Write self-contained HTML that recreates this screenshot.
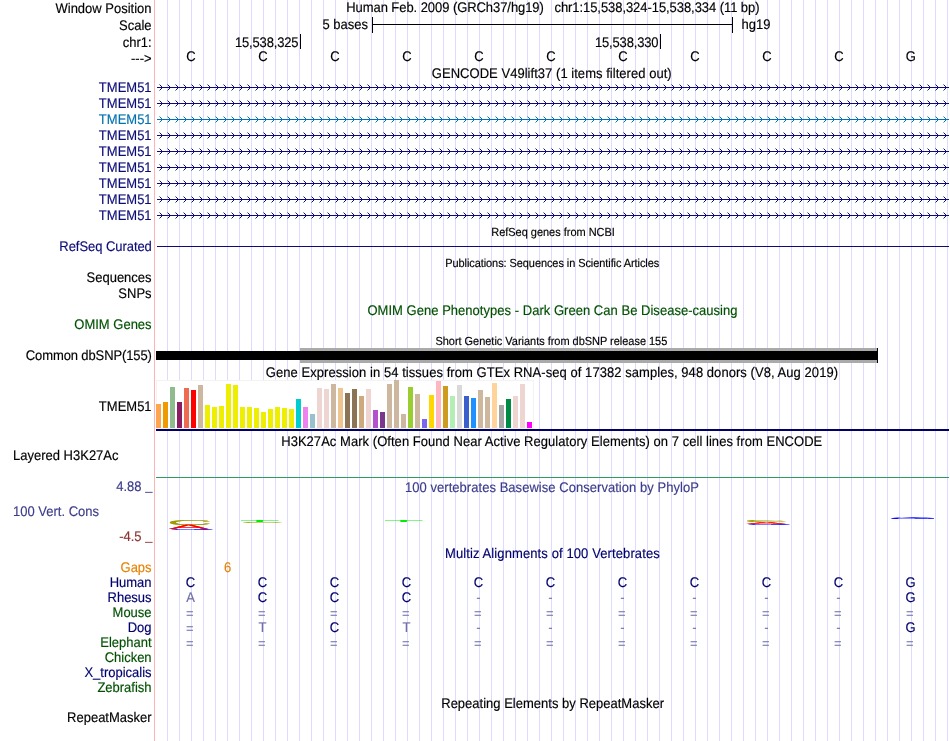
<!DOCTYPE html>
<html lang="en"><head><meta charset="utf-8"><title>UCSC Genome Browser chr1:15,538,324-15,538,334</title>
<style>html,body{margin:0;padding:0;background:#fff}body{width:950px;height:741px;overflow:hidden}svg{display:block;will-change:transform}text{stroke-width:0.15px;text-rendering:geometricPrecision;font-family:"Liberation Sans",sans-serif;font-size:13px}.s{font-size:11px}.r{text-anchor:end}.c{text-anchor:middle}</style>
</head><body>
<svg width="950" height="741" viewBox="0 0 950 741">
<rect width="950" height="741" fill="#fff"/>
<g fill="#dcdcff" shape-rendering="crispEdges">
<rect x="167" y="0" width="1" height="741"/>
<rect x="179" y="0" width="1" height="741"/>
<rect x="191" y="0" width="1" height="741"/>
<rect x="203" y="0" width="1" height="741"/>
<rect x="215" y="0" width="1" height="741"/>
<rect x="227" y="0" width="1" height="741"/>
<rect x="239" y="0" width="1" height="741"/>
<rect x="251" y="0" width="1" height="741"/>
<rect x="263" y="0" width="1" height="741"/>
<rect x="275" y="0" width="1" height="741"/>
<rect x="287" y="0" width="1" height="741"/>
<rect x="299" y="0" width="1" height="741"/>
<rect x="311" y="0" width="1" height="741"/>
<rect x="323" y="0" width="1" height="741"/>
<rect x="335" y="0" width="1" height="741"/>
<rect x="347" y="0" width="1" height="741"/>
<rect x="359" y="0" width="1" height="741"/>
<rect x="371" y="0" width="1" height="741"/>
<rect x="383" y="0" width="1" height="741"/>
<rect x="395" y="0" width="1" height="741"/>
<rect x="407" y="0" width="1" height="741"/>
<rect x="419" y="0" width="1" height="741"/>
<rect x="431" y="0" width="1" height="741"/>
<rect x="443" y="0" width="1" height="741"/>
<rect x="455" y="0" width="1" height="741"/>
<rect x="467" y="0" width="1" height="741"/>
<rect x="479" y="0" width="1" height="741"/>
<rect x="491" y="0" width="1" height="741"/>
<rect x="503" y="0" width="1" height="741"/>
<rect x="515" y="0" width="1" height="741"/>
<rect x="527" y="0" width="1" height="741"/>
<rect x="539" y="0" width="1" height="741"/>
<rect x="551" y="0" width="1" height="741"/>
<rect x="563" y="0" width="1" height="741"/>
<rect x="575" y="0" width="1" height="741"/>
<rect x="587" y="0" width="1" height="741"/>
<rect x="599" y="0" width="1" height="741"/>
<rect x="611" y="0" width="1" height="741"/>
<rect x="623" y="0" width="1" height="741"/>
<rect x="635" y="0" width="1" height="741"/>
<rect x="647" y="0" width="1" height="741"/>
<rect x="659" y="0" width="1" height="741"/>
<rect x="671" y="0" width="1" height="741"/>
<rect x="683" y="0" width="1" height="741"/>
<rect x="695" y="0" width="1" height="741"/>
<rect x="707" y="0" width="1" height="741"/>
<rect x="719" y="0" width="1" height="741"/>
<rect x="731" y="0" width="1" height="741"/>
<rect x="743" y="0" width="1" height="741"/>
<rect x="755" y="0" width="1" height="741"/>
<rect x="767" y="0" width="1" height="741"/>
<rect x="779" y="0" width="1" height="741"/>
<rect x="791" y="0" width="1" height="741"/>
<rect x="803" y="0" width="1" height="741"/>
<rect x="815" y="0" width="1" height="741"/>
<rect x="827" y="0" width="1" height="741"/>
<rect x="839" y="0" width="1" height="741"/>
<rect x="851" y="0" width="1" height="741"/>
<rect x="863" y="0" width="1" height="741"/>
<rect x="875" y="0" width="1" height="741"/>
<rect x="887" y="0" width="1" height="741"/>
<rect x="899" y="0" width="1" height="741"/>
<rect x="911" y="0" width="1" height="741"/>
<rect x="923" y="0" width="1" height="741"/>
<rect x="935" y="0" width="1" height="741"/>
<rect x="947" y="0" width="1" height="741"/>
</g>
<rect x="154" y="0" width="1" height="741" fill="#ffb4b4" shape-rendering="crispEdges"/>
<g fill="#000" shape-rendering="crispEdges">
<rect x="372" y="24" width="361" height="1"/>
<rect x="372" y="17" width="1" height="16"/>
<rect x="732" y="17" width="1" height="16"/>
<rect x="300" y="34" width="1" height="15"/>
<rect x="660" y="34" width="1" height="15"/>
</g>
<g fill="#000" stroke="#000">
<text class="r" x="151.6" y="12.178" transform="scale(1 1.07)">Window Position</text>
<text class="r" x="151.6" y="28.065" transform="scale(1 1.07)">Scale</text>
<text class="r" x="151.6" y="43.953" transform="scale(1 1.07)">chr1:</text>
<text class="r" x="151.6" y="58.907" transform="scale(1 1.07)">---&gt;</text>
<text x="346.24" y="11.243" transform="scale(1 1.07)" fill="#000" stroke="#000" textLength="413.28" lengthAdjust="spacing" xml:space="preserve">Human Feb. 2009 (GRCh37/hg19)   chr1:15,538,324-15,538,334 (11 bp)</text>
<text class="r" x="368" y="27.131" transform="scale(1 1.07)">5 bases</text>
<text x="741.5" y="27.131" transform="scale(1 1.07)">hg19</text>
<text class="r" x="298.6" y="43.953" transform="scale(1 1.07)" textLength="63.7" lengthAdjust="spacing">15,538,325</text>
<text class="r" x="658.6" y="43.953" transform="scale(1 1.07)" textLength="63.7" lengthAdjust="spacing">15,538,330</text>
<text class="c" x="190.9" y="57.037" transform="scale(1 1.07)">C</text>
<text class="c" x="262.9" y="57.037" transform="scale(1 1.07)">C</text>
<text class="c" x="334.9" y="57.037" transform="scale(1 1.07)">C</text>
<text class="c" x="406.9" y="57.037" transform="scale(1 1.07)">C</text>
<text class="c" x="478.9" y="57.037" transform="scale(1 1.07)">C</text>
<text class="c" x="550.9" y="57.037" transform="scale(1 1.07)">C</text>
<text class="c" x="622.9" y="57.037" transform="scale(1 1.07)">C</text>
<text class="c" x="694.9" y="57.037" transform="scale(1 1.07)">C</text>
<text class="c" x="766.9" y="57.037" transform="scale(1 1.07)">C</text>
<text class="c" x="838.9" y="57.037" transform="scale(1 1.07)">C</text>
<text class="c" x="910.9" y="57.037" transform="scale(1 1.07)">G</text>
<text x="431.80" y="72.925" transform="scale(1 1.07)" fill="#000" stroke="#000" textLength="239.90" lengthAdjust="spacing" xml:space="preserve">GENCODE V49lift37 (1 items filtered out)</text>
</g>
<defs><pattern id="cv" x="155" y="84" width="8" height="16" patternUnits="userSpaceOnUse"><g fill="#0c0c78" shape-rendering="crispEdges"><rect x="6" y="2" width="1" height="1"/><rect x="6" y="3" width="1" height="1"/><rect x="6" y="4" width="1" height="1"/><rect x="5" y="1" width="1" height="1"/><rect x="5" y="5" width="1" height="1"/><rect x="4" y="0" width="1" height="1" opacity="0.45"/><rect x="4" y="6" width="1" height="1" opacity="0.45"/></g></pattern><pattern id="cw" x="155" y="84" width="8" height="16" patternUnits="userSpaceOnUse"><g fill="#0171af" shape-rendering="crispEdges"><rect x="6" y="2" width="1" height="1"/><rect x="6" y="3" width="1" height="1"/><rect x="6" y="4" width="1" height="1"/><rect x="5" y="1" width="1" height="1"/><rect x="5" y="5" width="1" height="1"/><rect x="4" y="0" width="1" height="1" opacity="0.45"/><rect x="4" y="6" width="1" height="1" opacity="0.45"/></g></pattern></defs>
<g shape-rendering="crispEdges">
<rect x="155" y="84" width="792" height="32" fill="url(#cv)"/>
<rect x="155" y="116" width="792" height="16" fill="url(#cw)"/>
<rect x="155" y="132" width="792" height="96" fill="url(#cv)"/>
<rect x="157" y="87" width="792" height="1" fill="#0c0c78"/>
<rect x="157" y="103" width="792" height="1" fill="#0c0c78"/>
<rect x="157" y="119" width="792" height="1" fill="#0171af"/>
<rect x="157" y="135" width="792" height="1" fill="#0c0c78"/>
<rect x="157" y="151" width="792" height="1" fill="#0c0c78"/>
<rect x="157" y="167" width="792" height="1" fill="#0c0c78"/>
<rect x="157" y="183" width="792" height="1" fill="#0c0c78"/>
<rect x="157" y="199" width="792" height="1" fill="#0c0c78"/>
<rect x="157" y="215" width="792" height="1" fill="#0c0c78"/>
</g>
<text class="r" x="151.6" y="86.009" transform="scale(1 1.07)" fill="#0c0c78" stroke="#0c0c78">TMEM51</text>
<text class="r" x="151.6" y="100.963" transform="scale(1 1.07)" fill="#0c0c78" stroke="#0c0c78">TMEM51</text>
<text class="r" x="151.6" y="115.916" transform="scale(1 1.07)" fill="#0171af" stroke="#0171af">TMEM51</text>
<text class="r" x="151.6" y="130.869" transform="scale(1 1.07)" fill="#0c0c78" stroke="#0c0c78">TMEM51</text>
<text class="r" x="151.6" y="145.822" transform="scale(1 1.07)" fill="#0c0c78" stroke="#0c0c78">TMEM51</text>
<text class="r" x="151.6" y="160.776" transform="scale(1 1.07)" fill="#0c0c78" stroke="#0c0c78">TMEM51</text>
<text class="r" x="151.6" y="175.729" transform="scale(1 1.07)" fill="#0c0c78" stroke="#0c0c78">TMEM51</text>
<text class="r" x="151.6" y="190.682" transform="scale(1 1.07)" fill="#0c0c78" stroke="#0c0c78">TMEM51</text>
<text class="r" x="151.6" y="205.636" transform="scale(1 1.07)" fill="#0c0c78" stroke="#0c0c78">TMEM51</text>
<text class="s" x="491.20" y="220.589" transform="scale(1 1.07)" fill="#000" stroke="#000" textLength="123.69" lengthAdjust="spacing" xml:space="preserve">RefSeq genes from NCBI</text>
<text x="59.32" y="234.607" transform="scale(1 1.07)" fill="#0c0c78" stroke="#0c0c78" textLength="92.53" lengthAdjust="spacing" xml:space="preserve">RefSeq Curated</text>
<rect x="157" y="246" width="792" height="1" fill="#0c0c78" shape-rendering="crispEdges"/>
<text class="s" x="445.20" y="249.561" transform="scale(1 1.07)" fill="#000" stroke="#000" textLength="214.07" lengthAdjust="spacing" xml:space="preserve">Publications: Sequences in Scientific Articles</text>
<text class="r" x="151.6" y="263.579" transform="scale(1 1.07)" fill="#000" stroke="#000">Sequences</text>
<text class="r" x="151.6" y="278.533" transform="scale(1 1.07)" fill="#000" stroke="#000">SNPs</text>
<text x="367.40" y="294.421" transform="scale(1 1.07)" fill="#005000" stroke="#005000" textLength="370.12" lengthAdjust="spacing" xml:space="preserve">OMIM Gene Phenotypes - Dark Green Can Be Disease-causing</text>
<text class="r" x="151.6" y="307.505" transform="scale(1 1.07)" fill="#005000" stroke="#005000">OMIM Genes</text>
<text class="s" x="435.40" y="322.458" transform="scale(1 1.07)" fill="#000" stroke="#000" textLength="231.91" lengthAdjust="spacing" xml:space="preserve">Short Genetic Variants from dbSNP release 155</text>
<text x="25.80" y="336.477" transform="scale(1 1.07)" fill="#000" stroke="#000" textLength="126.07" lengthAdjust="spacing" xml:space="preserve">Common dbSNP(155)</text>
<g shape-rendering="crispEdges">
<rect x="300" y="348" width="577" height="15" fill="#aaaaaa"/>
<rect x="156" y="351" width="722" height="9" fill="#000"/>
<rect x="877" y="348" width="1" height="15" fill="#000"/>
</g>
<text x="265.80" y="352.364" transform="scale(1 1.07)" fill="#000" stroke="#000" textLength="572.25" lengthAdjust="spacing" xml:space="preserve">Gene Expression in 54 tissues from GTEx RNA-seq of 17382 samples, 948 donors (V8, Aug 2019)</text>
<text class="r" x="151.6" y="384.140" transform="scale(1 1.07)" fill="#000" stroke="#000">TMEM51</text>
<g shape-rendering="crispEdges">
<rect x="156" y="380" width="378" height="49" fill="#f3f3f3"/>
<rect x="157" y="381" width="376" height="47" fill="#fff"/>
<rect x="156" y="404" width="5" height="24" fill="#FFA54F"/>
<rect x="163" y="402" width="5" height="26" fill="#EE9A00"/>
<rect x="170" y="387" width="5" height="41" fill="#8FBC8F"/>
<rect x="177" y="402" width="5" height="26" fill="#8B1C62"/>
<rect x="184" y="388" width="5" height="40" fill="#EE6A50"/>
<rect x="191" y="390" width="5" height="38" fill="#FF0000"/>
<rect x="198" y="385" width="5" height="43" fill="#CDB79E"/>
<rect x="205" y="405" width="5" height="23" fill="#EEEE00"/>
<rect x="212" y="407" width="5" height="21" fill="#EEEE00"/>
<rect x="219" y="406" width="5" height="22" fill="#EEEE00"/>
<rect x="226" y="384" width="5" height="44" fill="#EEEE00"/>
<rect x="233" y="385" width="5" height="43" fill="#EEEE00"/>
<rect x="240" y="407" width="5" height="21" fill="#EEEE00"/>
<rect x="247" y="407" width="5" height="21" fill="#EEEE00"/>
<rect x="254" y="408" width="5" height="20" fill="#EEEE00"/>
<rect x="261" y="412" width="5" height="16" fill="#EEEE00"/>
<rect x="268" y="409" width="5" height="19" fill="#EEEE00"/>
<rect x="275" y="407" width="5" height="21" fill="#EEEE00"/>
<rect x="282" y="408" width="5" height="20" fill="#EEEE00"/>
<rect x="289" y="409" width="5" height="19" fill="#EEEE00"/>
<rect x="296" y="399" width="5" height="29" fill="#00CDCD"/>
<rect x="303" y="407" width="5" height="21" fill="#EE82EE"/>
<rect x="310" y="414" width="5" height="14" fill="#9AC0CD"/>
<rect x="317" y="388" width="5" height="40" fill="#EED5D2"/>
<rect x="324" y="389" width="5" height="39" fill="#EED5D2"/>
<rect x="331" y="384" width="5" height="44" fill="#CDB79E"/>
<rect x="338" y="388" width="5" height="40" fill="#EEC591"/>
<rect x="345" y="393" width="5" height="35" fill="#8B7355"/>
<rect x="352" y="389" width="5" height="39" fill="#8B7355"/>
<rect x="359" y="396" width="5" height="32" fill="#CDAA7D"/>
<rect x="366" y="389" width="5" height="39" fill="#EED5D2"/>
<rect x="373" y="410" width="5" height="18" fill="#B452CD"/>
<rect x="380" y="412" width="5" height="16" fill="#7A378B"/>
<rect x="387" y="384" width="5" height="44" fill="#CDB79E"/>
<rect x="394" y="380" width="5" height="48" fill="#CDB79E"/>
<rect x="401" y="414" width="5" height="14" fill="#CDB79E"/>
<rect x="408" y="387" width="5" height="41" fill="#9ACD32"/>
<rect x="415" y="394" width="5" height="34" fill="#CDB79E"/>
<rect x="422" y="419" width="5" height="9" fill="#7A67EE"/>
<rect x="429" y="395" width="5" height="33" fill="#FFD700"/>
<rect x="436" y="381" width="5" height="47" fill="#FFB6C1"/>
<rect x="443" y="386" width="5" height="42" fill="#CD9B1D"/>
<rect x="450" y="396" width="5" height="32" fill="#B4EEB4"/>
<rect x="457" y="385" width="5" height="43" fill="#D9D9D9"/>
<rect x="464" y="396" width="5" height="32" fill="#3A5FCD"/>
<rect x="471" y="398" width="5" height="30" fill="#1E90FF"/>
<rect x="478" y="390" width="5" height="38" fill="#CDB79E"/>
<rect x="485" y="397" width="5" height="31" fill="#CDB79E"/>
<rect x="492" y="383" width="5" height="45" fill="#FFD39B"/>
<rect x="499" y="405" width="5" height="23" fill="#A6A6A6"/>
<rect x="506" y="399" width="5" height="29" fill="#008B45"/>
<rect x="513" y="396" width="5" height="32" fill="#EED5D2"/>
<rect x="520" y="384" width="5" height="44" fill="#EED5D2"/>
<rect x="527" y="422" width="5" height="6" fill="#FF00FF"/>
<rect x="156" y="429" width="793" height="2" fill="#000068"/>
</g>
<text x="281.20" y="416.850" transform="scale(1 1.07)" fill="#000" stroke="#000" textLength="541.05" lengthAdjust="spacing" xml:space="preserve">H3K27Ac Mark (Often Found Near Active Regulatory Elements) on 7 cell lines from ENCODE</text>
<text x="13" y="429.935" transform="scale(1 1.07)" fill="#000" stroke="#000">Layered H3K27Ac</text>
<rect x="156" y="477" width="793" height="1" fill="#2f9a5f" shape-rendering="crispEdges"/>
<text x="405.00" y="459.841" transform="scale(1 1.07)" fill="#3c3c8c" stroke="#3c3c8c" textLength="293.84" lengthAdjust="spacing" xml:space="preserve">100 vertebrates Basewise Conservation by PhyloP</text>
<text class="r" x="141.6" y="458.907" transform="scale(1 1.07)" fill="#3c3c8c" stroke="#3c3c8c">4.88</text>
<text class="r" x="152.5" y="457.972" transform="scale(1 1.07)" fill="#3c3c8c" stroke="#3c3c8c" style="stroke-width:0">_</text>
<text x="13" y="482.271" transform="scale(1 1.07)" fill="#3c3c8c" stroke="#3c3c8c">100 Vert. Cons</text>
<text class="r" x="141.6" y="505.636" transform="scale(1 1.07)" fill="#8c3232" stroke="#8c3232">-4.5</text>
<text class="r" x="152.5" y="504.701" transform="scale(1 1.07)" fill="#8c3232" stroke="#8c3232" style="stroke-width:0">_</text>
<g>
<text transform="matrix(6.4266 0 0 0.7062 166.536 524.931)" style="font-size:10px" fill="#9c9c00">C</text><text transform="matrix(6.4266 0 0 0.7062 166.536 524.931)" style="font-size:10px" fill="#9c9c00">C</text>
<text transform="matrix(6.0475 0 0 0.6105 168.382 529.200)" style="font-size:10px" fill="#ff0000">A</text><text transform="matrix(6.0475 0 0 0.6105 168.382 529.200)" style="font-size:10px" fill="#ff0000">A</text>
<text transform="matrix(6.4335 0 0 0.1412 167.764 529.986)" style="font-size:10px" fill="#0000ff">G</text><text transform="matrix(6.4335 0 0 0.1412 167.764 529.986)" style="font-size:10px" fill="#0000ff">G</text>
<text transform="matrix(6.6498 0 0 0.2907 239.506 522.000)" style="font-size:10px" fill="#00ee00">T</text><text transform="matrix(6.6498 0 0 0.2907 239.506 522.000)" style="font-size:10px" fill="#00ee00">T</text>
<text transform="matrix(6.3161 0 0 0.1412 239.793 522.986)" style="font-size:10px" fill="#9c9c00">C</text><text transform="matrix(6.3161 0 0 0.1412 239.793 522.986)" style="font-size:10px" fill="#9c9c00">C</text>
<text transform="matrix(6.6498 0 0 0.2907 383.606 522.000)" style="font-size:10px" fill="#00ee00">T</text><text transform="matrix(6.6498 0 0 0.2907 383.606 522.000)" style="font-size:10px" fill="#00ee00">T</text>
<text transform="matrix(6.3161 0 0 0.2825 743.793 521.972)" style="font-size:10px" fill="#9c9c00">C</text><text transform="matrix(6.3161 0 0 0.2825 743.793 521.972)" style="font-size:10px" fill="#9c9c00">C</text>
<text transform="matrix(6.0324 0 0 0.2907 745.882 524.000)" style="font-size:10px" fill="#ff0000">A</text><text transform="matrix(6.0324 0 0 0.2907 745.882 524.000)" style="font-size:10px" fill="#ff0000">A</text>
<text transform="matrix(6.4335 0 0 0.1412 744.764 524.986)" style="font-size:10px" fill="#0000ff">G</text><text transform="matrix(6.4335 0 0 0.1412 744.764 524.986)" style="font-size:10px" fill="#0000ff">G</text>
<text transform="matrix(6.5867 0 0 0.2260 887.687 518.978)" style="font-size:10px" fill="#0000ff">G</text><text transform="matrix(6.5867 0 0 0.2260 887.687 518.978)" style="font-size:10px" fill="#0000ff">G</text>
</g>
<text x="444.96" y="521.523" transform="scale(1 1.07)" fill="#00006e" stroke="#00006e" textLength="214.76" lengthAdjust="spacing" xml:space="preserve">Multiz Alignments of 100 Vertebrates</text>
<text class="r" x="151.6" y="534.607" transform="scale(1 1.07)" fill="#e68200" stroke="#e68200">Gaps</text>
<text class="r" x="151.6" y="548.626" transform="scale(1 1.07)" fill="#00006e" stroke="#00006e">Human</text>
<text class="r" x="151.6" y="562.645" transform="scale(1 1.07)" fill="#00006e" stroke="#00006e">Rhesus</text>
<text class="r" x="151.6" y="576.664" transform="scale(1 1.07)" fill="#005000" stroke="#005000">Mouse</text>
<text class="r" x="151.6" y="590.682" transform="scale(1 1.07)" fill="#00006e" stroke="#00006e">Dog</text>
<text class="r" x="151.6" y="604.701" transform="scale(1 1.07)" fill="#005000" stroke="#005000">Elephant</text>
<text class="r" x="151.6" y="618.720" transform="scale(1 1.07)" fill="#005000" stroke="#005000">Chicken</text>
<text class="r" x="151.6" y="632.738" transform="scale(1 1.07)" fill="#00006e" stroke="#00006e">X_tropicalis</text>
<text class="r" x="151.6" y="646.757" transform="scale(1 1.07)" fill="#005000" stroke="#005000">Zebrafish</text>
<text class="c" x="227.7" y="534.607" transform="scale(1 1.07)" fill="#e68200" stroke="#e68200">6</text>
<text class="c" x="190.5" y="548.626" transform="scale(1 1.07)" fill="#00006e" stroke="#00006e">C</text>
<text class="c" x="262.5" y="548.626" transform="scale(1 1.07)" fill="#00006e" stroke="#00006e">C</text>
<text class="c" x="334.5" y="548.626" transform="scale(1 1.07)" fill="#00006e" stroke="#00006e">C</text>
<text class="c" x="406.5" y="548.626" transform="scale(1 1.07)" fill="#00006e" stroke="#00006e">C</text>
<text class="c" x="478.5" y="548.626" transform="scale(1 1.07)" fill="#00006e" stroke="#00006e">C</text>
<text class="c" x="550.5" y="548.626" transform="scale(1 1.07)" fill="#00006e" stroke="#00006e">C</text>
<text class="c" x="622.5" y="548.626" transform="scale(1 1.07)" fill="#00006e" stroke="#00006e">C</text>
<text class="c" x="694.5" y="548.626" transform="scale(1 1.07)" fill="#00006e" stroke="#00006e">C</text>
<text class="c" x="766.5" y="548.626" transform="scale(1 1.07)" fill="#00006e" stroke="#00006e">C</text>
<text class="c" x="838.5" y="548.626" transform="scale(1 1.07)" fill="#00006e" stroke="#00006e">C</text>
<text class="c" x="910.5" y="548.626" transform="scale(1 1.07)" fill="#00006e" stroke="#00006e">G</text>
<text class="c" x="190.5" y="562.645" transform="scale(1 1.07)" fill="#7070a8" stroke="#7070a8">A</text>
<text class="c" x="262.5" y="562.645" transform="scale(1 1.07)" fill="#00006e" stroke="#00006e">C</text>
<text class="c" x="334.5" y="562.645" transform="scale(1 1.07)" fill="#00006e" stroke="#00006e">C</text>
<text class="c" x="406.5" y="562.645" transform="scale(1 1.07)" fill="#00006e" stroke="#00006e">C</text>
<text class="c" x="478.5" y="562.645" transform="scale(1 1.07)" fill="#6c6ca6" stroke="#6c6ca6" style="stroke-width:0">-</text>
<text class="c" x="550.5" y="562.645" transform="scale(1 1.07)" fill="#6c6ca6" stroke="#6c6ca6" style="stroke-width:0">-</text>
<text class="c" x="622.5" y="562.645" transform="scale(1 1.07)" fill="#6c6ca6" stroke="#6c6ca6" style="stroke-width:0">-</text>
<text class="c" x="694.5" y="562.645" transform="scale(1 1.07)" fill="#6c6ca6" stroke="#6c6ca6" style="stroke-width:0">-</text>
<text class="c" x="766.5" y="562.645" transform="scale(1 1.07)" fill="#6c6ca6" stroke="#6c6ca6" style="stroke-width:0">-</text>
<text class="c" x="838.5" y="562.645" transform="scale(1 1.07)" fill="#6c6ca6" stroke="#6c6ca6" style="stroke-width:0">-</text>
<text class="c" x="910.5" y="562.645" transform="scale(1 1.07)" fill="#00006e" stroke="#00006e">G</text>
<text class="c" x="189.9" y="577.879" transform="scale(1 1.07)" fill="#6c6ca6" stroke="#6c6ca6" style="stroke-width:0">=</text>
<text class="c" x="261.9" y="577.879" transform="scale(1 1.07)" fill="#6c6ca6" stroke="#6c6ca6" style="stroke-width:0">=</text>
<text class="c" x="333.9" y="577.879" transform="scale(1 1.07)" fill="#6c6ca6" stroke="#6c6ca6" style="stroke-width:0">=</text>
<text class="c" x="405.9" y="577.879" transform="scale(1 1.07)" fill="#6c6ca6" stroke="#6c6ca6" style="stroke-width:0">=</text>
<text class="c" x="477.9" y="577.879" transform="scale(1 1.07)" fill="#6c6ca6" stroke="#6c6ca6" style="stroke-width:0">=</text>
<text class="c" x="549.9" y="577.879" transform="scale(1 1.07)" fill="#6c6ca6" stroke="#6c6ca6" style="stroke-width:0">=</text>
<text class="c" x="621.9" y="577.879" transform="scale(1 1.07)" fill="#6c6ca6" stroke="#6c6ca6" style="stroke-width:0">=</text>
<text class="c" x="693.9" y="577.879" transform="scale(1 1.07)" fill="#6c6ca6" stroke="#6c6ca6" style="stroke-width:0">=</text>
<text class="c" x="765.9" y="577.879" transform="scale(1 1.07)" fill="#6c6ca6" stroke="#6c6ca6" style="stroke-width:0">=</text>
<text class="c" x="837.9" y="577.879" transform="scale(1 1.07)" fill="#6c6ca6" stroke="#6c6ca6" style="stroke-width:0">=</text>
<text class="c" x="909.9" y="577.879" transform="scale(1 1.07)" fill="#6c6ca6" stroke="#6c6ca6" style="stroke-width:0">=</text>
<text class="c" x="189.9" y="591.897" transform="scale(1 1.07)" fill="#6c6ca6" stroke="#6c6ca6" style="stroke-width:0">=</text>
<text class="c" x="262.5" y="590.682" transform="scale(1 1.07)" fill="#7070a8" stroke="#7070a8">T</text>
<text class="c" x="334.5" y="590.682" transform="scale(1 1.07)" fill="#00006e" stroke="#00006e">C</text>
<text class="c" x="406.5" y="590.682" transform="scale(1 1.07)" fill="#7070a8" stroke="#7070a8">T</text>
<text class="c" x="478.5" y="590.682" transform="scale(1 1.07)" fill="#6c6ca6" stroke="#6c6ca6" style="stroke-width:0">-</text>
<text class="c" x="550.5" y="590.682" transform="scale(1 1.07)" fill="#6c6ca6" stroke="#6c6ca6" style="stroke-width:0">-</text>
<text class="c" x="622.5" y="590.682" transform="scale(1 1.07)" fill="#6c6ca6" stroke="#6c6ca6" style="stroke-width:0">-</text>
<text class="c" x="694.5" y="590.682" transform="scale(1 1.07)" fill="#6c6ca6" stroke="#6c6ca6" style="stroke-width:0">-</text>
<text class="c" x="766.5" y="590.682" transform="scale(1 1.07)" fill="#6c6ca6" stroke="#6c6ca6" style="stroke-width:0">-</text>
<text class="c" x="838.5" y="590.682" transform="scale(1 1.07)" fill="#6c6ca6" stroke="#6c6ca6" style="stroke-width:0">-</text>
<text class="c" x="910.5" y="590.682" transform="scale(1 1.07)" fill="#00006e" stroke="#00006e">G</text>
<text class="c" x="189.9" y="605.916" transform="scale(1 1.07)" fill="#6c6ca6" stroke="#6c6ca6" style="stroke-width:0">=</text>
<text class="c" x="261.9" y="605.916" transform="scale(1 1.07)" fill="#6c6ca6" stroke="#6c6ca6" style="stroke-width:0">=</text>
<text class="c" x="333.9" y="605.916" transform="scale(1 1.07)" fill="#6c6ca6" stroke="#6c6ca6" style="stroke-width:0">=</text>
<text class="c" x="405.9" y="605.916" transform="scale(1 1.07)" fill="#6c6ca6" stroke="#6c6ca6" style="stroke-width:0">=</text>
<text class="c" x="477.9" y="605.916" transform="scale(1 1.07)" fill="#6c6ca6" stroke="#6c6ca6" style="stroke-width:0">=</text>
<text class="c" x="549.9" y="605.916" transform="scale(1 1.07)" fill="#6c6ca6" stroke="#6c6ca6" style="stroke-width:0">=</text>
<text class="c" x="621.9" y="605.916" transform="scale(1 1.07)" fill="#6c6ca6" stroke="#6c6ca6" style="stroke-width:0">=</text>
<text class="c" x="693.9" y="605.916" transform="scale(1 1.07)" fill="#6c6ca6" stroke="#6c6ca6" style="stroke-width:0">=</text>
<text class="c" x="765.9" y="605.916" transform="scale(1 1.07)" fill="#6c6ca6" stroke="#6c6ca6" style="stroke-width:0">=</text>
<text class="c" x="837.9" y="605.916" transform="scale(1 1.07)" fill="#6c6ca6" stroke="#6c6ca6" style="stroke-width:0">=</text>
<text class="c" x="909.9" y="605.916" transform="scale(1 1.07)" fill="#6c6ca6" stroke="#6c6ca6" style="stroke-width:0">=</text>
<text x="441.24" y="661.710" transform="scale(1 1.07)" fill="#000" stroke="#000" textLength="222.78" lengthAdjust="spacing" xml:space="preserve">Repeating Elements by RepeatMasker</text>
<text class="r" x="151.6" y="674.794" transform="scale(1 1.07)" fill="#000" stroke="#000">RepeatMasker</text>
</svg></body></html>
